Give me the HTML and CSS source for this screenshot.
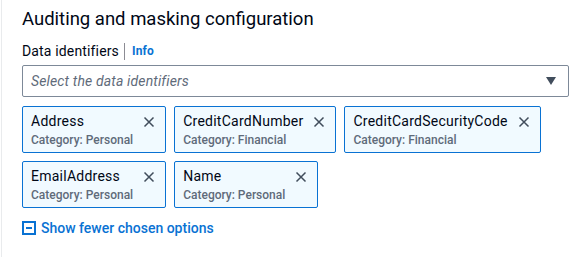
FILE: index.html
```html
<!DOCTYPE html>
<html lang="en">
<head>
	<meta charset="UTF-8">
	<title>Auditing and masking configuration</title>
	<link rel="stylesheet" href="styles.css">
</head>
<body>
	<div id="panel">
		<h2>Auditing and masking configuration</h2>
		<div class="field-label">
			<span class="label-text">Data identifiers</span>
			<a class="info" href="#">Info</a>
		</div>
		<div class="select">
			<span class="placeholder">Select the data identifiers</span>
			<span class="caret"></span>
		</div>
		<div class="tokens">
			<div class="token">
				<div class="token-text">
					<div class="token-name">Address</div>
					<div class="token-tag">Category: Personal</div>
				</div>
				<svg class="dismiss" viewBox="0 0 16 16"><path d="M2 2l12 12M14 2L2 14"/></svg>
			</div>
			<div class="token">
				<div class="token-text">
					<div class="token-name">CreditCardNumber</div>
					<div class="token-tag">Category: Financial</div>
				</div>
				<svg class="dismiss" viewBox="0 0 16 16"><path d="M2 2l12 12M14 2L2 14"/></svg>
			</div>
			<div class="token">
				<div class="token-text">
					<div class="token-name">CreditCardSecurityCode</div>
					<div class="token-tag">Category: Financial</div>
				</div>
				<svg class="dismiss" viewBox="0 0 16 16"><path d="M2 2l12 12M14 2L2 14"/></svg>
			</div>
			<div class="token">
				<div class="token-text">
					<div class="token-name">EmailAddress</div>
					<div class="token-tag">Category: Personal</div>
				</div>
				<svg class="dismiss" viewBox="0 0 16 16"><path d="M2 2l12 12M14 2L2 14"/></svg>
			</div>
			<div class="token">
				<div class="token-text">
					<div class="token-name">Name</div>
					<div class="token-tag">Category: Personal</div>
				</div>
				<svg class="dismiss" viewBox="0 0 16 16"><path d="M2 2l12 12M14 2L2 14"/></svg>
			</div>
		</div>
		<a class="toggle" href="#">
			<svg class="toggle-icon" viewBox="0 0 14 14"><rect x="1" y="1" width="12" height="12"/><path d="M4 7h6"/></svg>
			Show fewer chosen options
		</a>
	</div>
</body>
</html>
```
FILE: styles.css
```css
body {
	margin: 0;
	background-color: #fff;
	font-family: Roboto, "Open Sans", sans-serif;
	color: #000716;
}
#panel {
	margin-left: 1px;
	border-left: 1px solid #e9ebed;
	padding: 7px 17px 0 20px;
	height: 257px;
	box-sizing: border-box;
}
h2 {
	font-size: 18.5px;
	line-height: 24px;
	font-weight: 400;
	margin: 0 0 9px 0;
}
.field-label {
	display: flex;
	align-items: center;
	font-size: 14px;
	line-height: 22px;
	margin-bottom: 3px;
	letter-spacing: 0.15px;
}
.label-text {
	padding-right: 5px;
	border-right: 1px solid #8c8c94;
	line-height: 17px;
}
.info {
	color: #0972d3;
	font-weight: 700;
	font-size: 12px;
	text-decoration: none;
	margin-left: 7px;
}
.select {
	display: flex;
	align-items: center;
	justify-content: space-between;
	height: 32px;
	box-sizing: border-box;
	border: 1px solid #7d8998;
	border-radius: 2px;
	padding: 0 12px 0 8px;
}
.placeholder {
	font-size: 14px;
	font-style: italic;
	color: #5f6b7a;
	letter-spacing: 0.15px;
}
.caret {
	width: 0;
	height: 0;
	border-left: 5px solid transparent;
	border-right: 5px solid transparent;
	border-top: 8px solid #414d5c;
}
.tokens {
	display: flex;
	flex-wrap: wrap;
	gap: 8px;
	margin-top: 9px;
}
.token {
	display: flex;
	align-items: flex-start;
	justify-content: space-between;
	min-width: 144px;
	height: 47px;
	box-sizing: border-box;
	background-color: #f1faff;
	border: 1px solid #0972d3;
	border-radius: 2px;
	padding: 3px 10px 0 8px;
	gap: 10px;
}
.token-name {
	font-size: 14px;
	line-height: 22px;
	letter-spacing: 0.25px;
}
.token-tag {
	font-size: 12px;
	line-height: 16px;
	color: #5f6b7a;
	font-weight: 500;
}
.dismiss {
	width: 12px;
	height: 12px;
	margin-top: 6px;
	fill: none;
	stroke: #414d5c;
	stroke-width: 2;
}
.toggle {
	display: flex;
	align-items: center;
	gap: 5px;
	margin-top: 12px;
	color: #0972d3;
	font-size: 14px;
	font-weight: 500;
	text-decoration: none;
}
.toggle-icon {
	width: 14px;
	height: 14px;
	fill: none;
	stroke: #0972d3;
	stroke-width: 2;
}
```
